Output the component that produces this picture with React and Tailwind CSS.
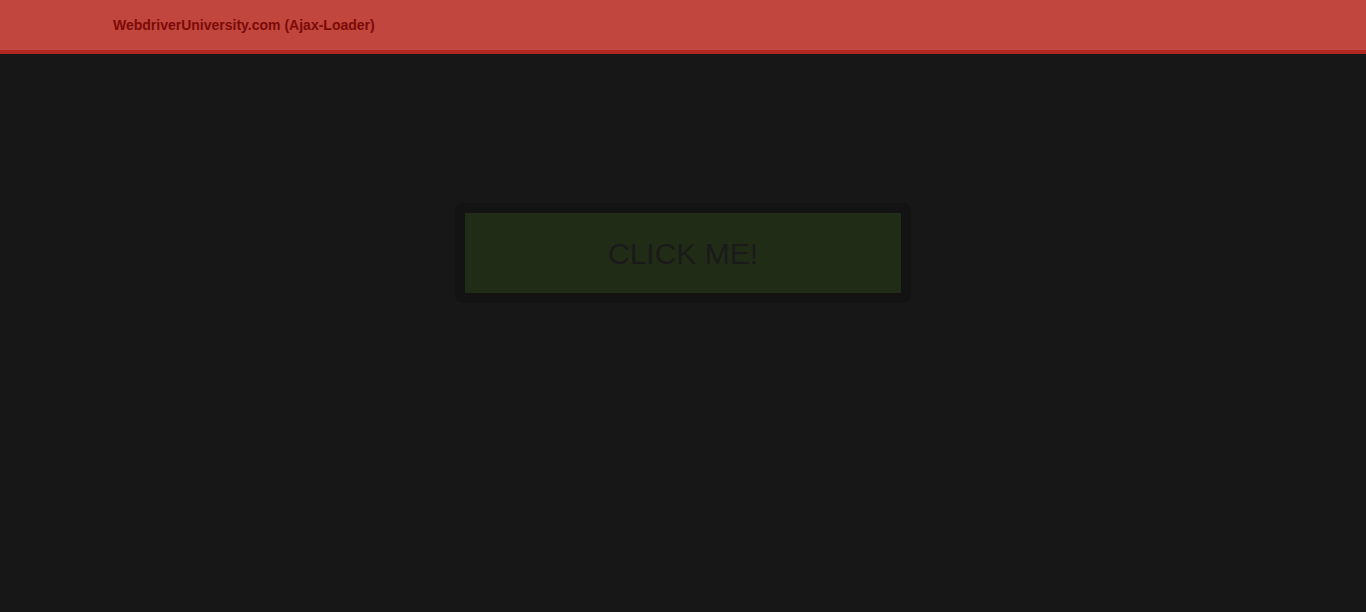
export default function App() {
  return (
    <div className="min-h-screen bg-[#171717] font-['Liberation_Sans',Arial,sans-serif]">
      {/* Navbar */}
      <nav className="h-[54px] bg-[#c0463e] border-b-4 border-[#b2271f]">
        <div className="h-[50px] flex items-center pl-[113px]">
          <span className="text-[14px] font-bold text-[#7c0a06]">WebdriverUniversity.com (Ajax-Loader)</span>
        </div>
      </nav>

      {/* Button area */}
      <div className="flex justify-center pt-[149px]">
        <div className="p-[10px] bg-[#131313] rounded-[8px]">
          <div className="w-[436px] h-[80px] bg-[#212c16] flex items-center justify-center">
            <span className="text-[30px] text-[#1a1a1a]">CLICK ME!</span>
          </div>
        </div>
      </div>
    </div>
  );
}
